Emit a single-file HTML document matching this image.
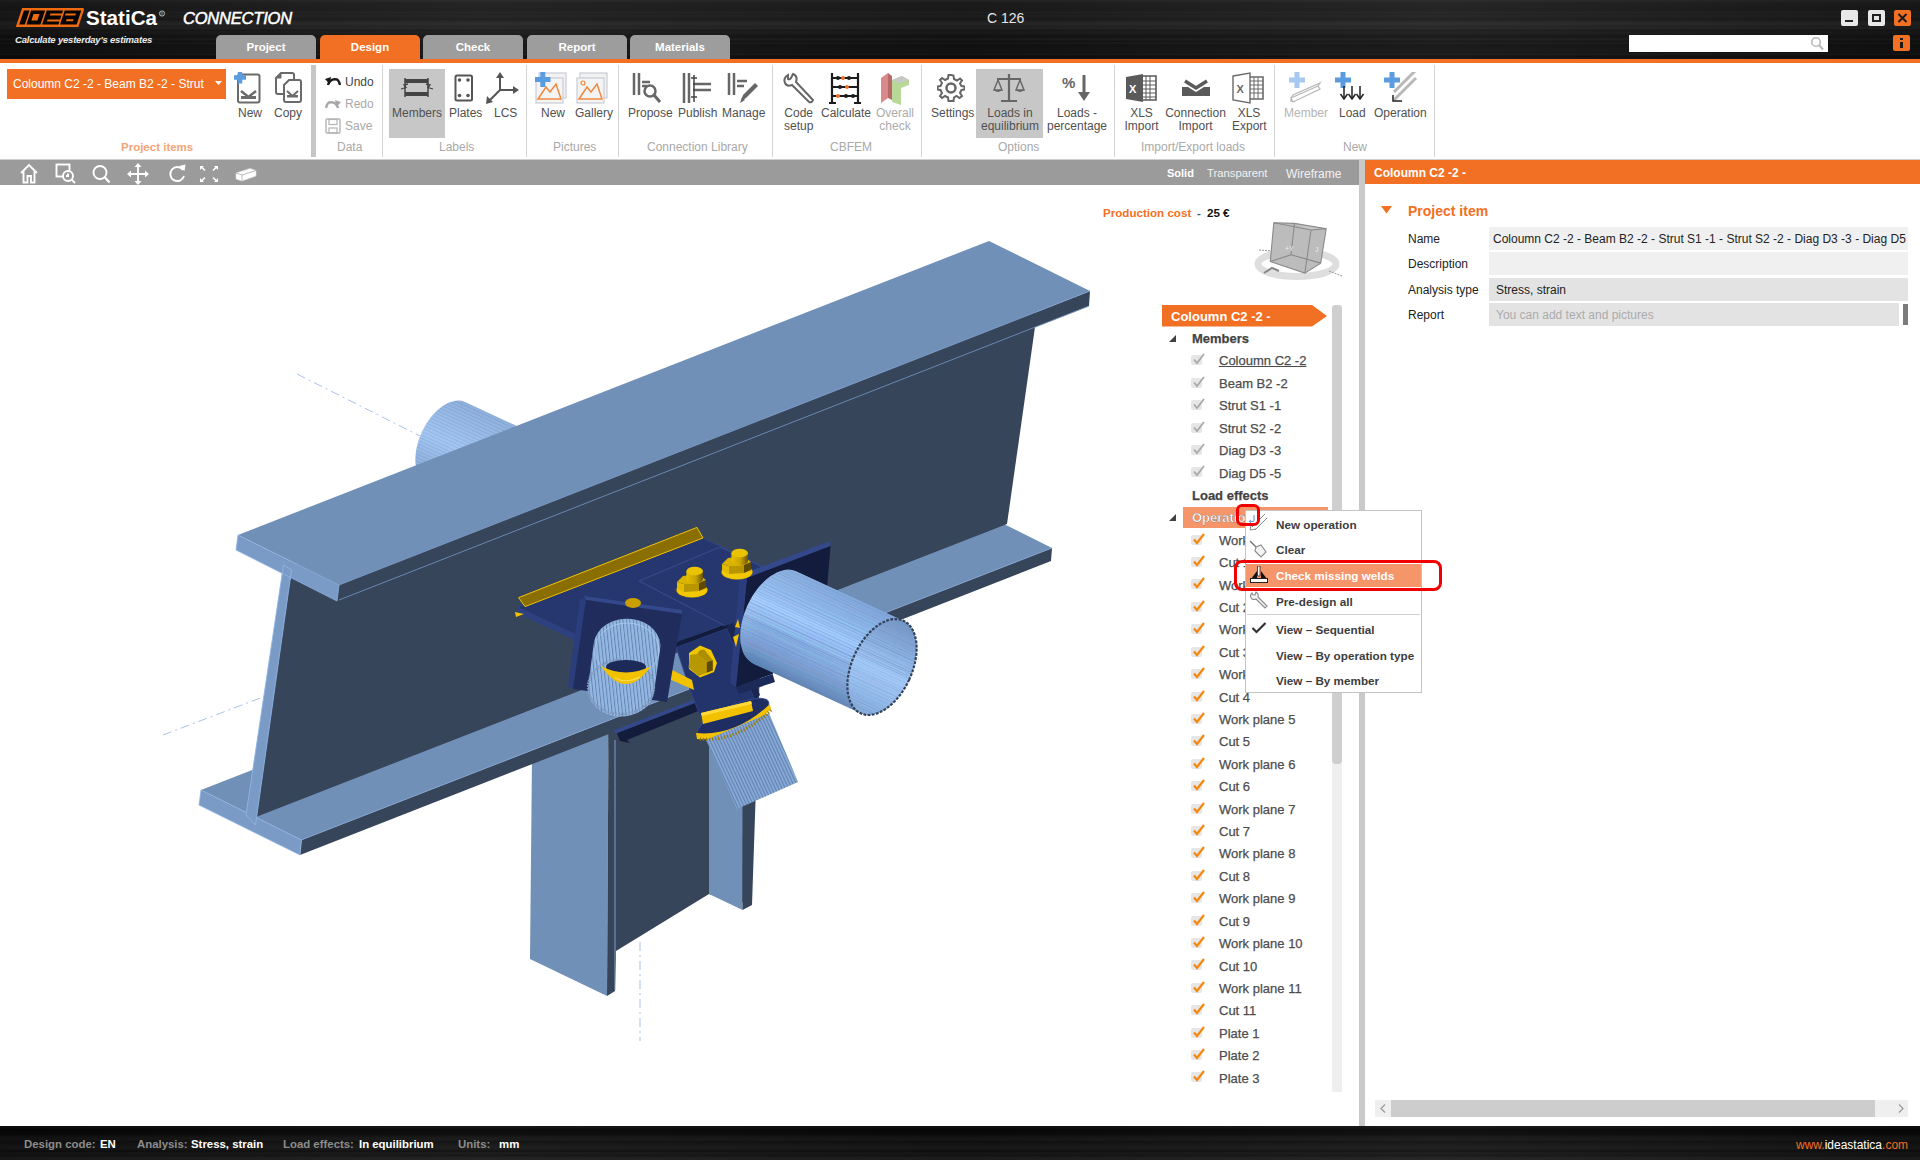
<!DOCTYPE html>
<html><head><meta charset="utf-8">
<style>
*{margin:0;padding:0;box-sizing:border-box}
html,body{width:1920px;height:1160px;overflow:hidden;background:#fff;font-family:"Liberation Sans",sans-serif}
.a{position:absolute}
.t{position:absolute;white-space:nowrap;line-height:1}
.brush{background:linear-gradient(90deg,rgba(0,0,0,.25),rgba(255,255,255,.02) 25%,rgba(0,0,0,.12) 50%,rgba(255,255,255,.03) 75%,rgba(0,0,0,.2))}
.brushT{background-image:linear-gradient(90deg,rgba(0,0,0,.25),rgba(255,255,255,.03) 25%,rgba(0,0,0,.1) 50%,rgba(255,255,255,.04) 75%,rgba(0,0,0,.2)),linear-gradient(180deg,rgb(36,36,36) 0.0px,rgb(37,37,37) 1.5px,rgb(30,30,30) 2.5px,rgb(29,29,29) 5.5px,rgb(27,27,27) 8.5px,rgb(30,30,30) 11.5px,rgb(34,34,34) 12.5px,rgb(29,29,29) 13.5px,rgb(32,32,32) 16.5px,rgb(25,25,25) 19.5px,rgb(34,34,34) 21.0px,rgb(40,40,40) 24.0px,rgb(31,31,31) 27.0px,rgb(39,39,39) 28.0px,rgb(30,30,30) 29.0px,rgb(24,24,24) 30.5px,rgb(28,28,28) 32.0px,rgb(23,23,23) 35.0px,rgb(18,18,18) 36.5px,rgb(28,28,28) 39.5px,rgb(16,16,16) 41.5px,rgb(25,25,25) 42.5px,rgb(17,17,17) 45.5px,rgb(20,20,20) 48.5px,rgb(20,20,20) 50.5px,rgb(17,17,17) 53.0px,rgb(25,25,25) 54.5px,rgb(10,10,10) 56.0px,rgb(18,18,18) 58.0px)}
.brushB{background-image:linear-gradient(90deg,rgba(0,0,0,.25),rgba(255,255,255,.02) 25%,rgba(0,0,0,.12) 50%,rgba(255,255,255,.03) 75%,rgba(0,0,0,.2)),linear-gradient(180deg,rgb(18,18,18) 0.0px,rgb(16,16,16) 2.0px,rgb(8,8,8) 3.0px,rgb(9,9,9) 5.5px,rgb(10,10,10) 7.5px,rgb(16,16,16) 10.0px,rgb(22,22,22) 11.0px,rgb(24,24,24) 14.0px,rgb(16,16,16) 16.0px,rgb(22,22,22) 18.0px,rgb(26,26,26) 21.0px,rgb(27,27,27) 22.0px,rgb(22,22,22) 24.0px,rgb(14,14,14) 25.0px,rgb(26,26,26) 27.0px,rgb(20,20,20) 29.5px,rgb(32,32,32) 32.0px)}
.tab{position:absolute;top:35px;height:24px;width:100px;border-radius:5px 5px 0 0;background:#9d9d9d;color:#fff;font-weight:bold;font-size:11.5px;text-align:center;line-height:24px}
.rl{position:absolute;font-size:12px;color:#505050;text-align:center;line-height:13px;white-space:nowrap}
.gl{position:absolute;top:141px;font-size:12px;color:#a9a9a9;white-space:nowrap;line-height:13px}
.sep{position:absolute;top:65px;width:1px;height:92px;background:#d4d4d4}
.tr{position:absolute;font-size:13px;color:#4d4d4d;white-space:nowrap;line-height:14px;-webkit-text-stroke:.25px #4d4d4d}
.cb{position:absolute;left:1191px;width:11px;height:10px;background:#e6e6e6;border-radius:2px}
.mi{position:absolute;left:1276px;font-size:11.7px;font-weight:bold;color:#3d3d3d;white-space:nowrap;line-height:13px}
</style></head>
<body>
<div class="a" style="left:0;top:0;width:1920px;height:1160px;overflow:hidden">

<!-- TITLE BAR -->
<div class="a brushT" style="left:0;top:0;width:1920px;height:59px"></div>
<div class="a" style="left:0;top:59px;width:1920px;height:4px;background:#f27024"></div>

<!-- logo -->
<svg class="a" style="left:0;top:0" width="180" height="34" viewBox="0 0 180 34">
 <g transform="translate(0,27) skewX(-18.43) translate(0,-27)">
  <path d="M15.8 8 H76.3 Q78.3 8 78.3 10 V27 H15.8 Z" fill="#f06a10"/>
  <g fill="#050505">
   <rect x="18.4" y="10.5" width="5.6" height="14"/>
   <path d="M25.6 10.5 H39.6 V24.5 H25.6 Z M29.2 14 V20.6 H35.2 V14 Z" fill-rule="evenodd"/>
   <path d="M41.2 10.5 H57.6 V13.6 H46 V15.6 H57.6 V19.4 H45 V21.4 H57.6 V24.5 H41.2 Z"/>
   <path d="M59.2 10.5 H75.8 V24.5 H59.2 Z M61.2 13.5 V15.5 H71.5 V13.5 Z M64 19.3 V21.3 H71 V19.3 Z" fill-rule="evenodd"/>
  </g>
 </g>
 <text x="86" y="25" font-family="Liberation Sans" font-weight="bold" font-size="20.5" fill="#fff" textLength="71" lengthAdjust="spacingAndGlyphs">StatiCa</text>
 <circle cx="162" cy="13.5" r="2.6" fill="none" stroke="#c8c8c8" stroke-width=".9"/>
 <text x="160.6" y="15" font-family="Liberation Sans" font-size="3.6" fill="#c8c8c8">R</text>
</svg>
<div class="t" style="left:183px;top:9.5px;font-size:16.5px;font-style:italic;color:#fff;letter-spacing:-.2px;-webkit-text-stroke:.5px #fff">CONNECTION</div>
<div class="t" style="left:15px;top:35px;font-size:9.5px;font-style:italic;font-weight:bold;color:#ececec;letter-spacing:-.2px">Calculate yesterday's estimates</div>
<div class="t" style="left:987px;top:11px;font-size:14px;color:#e6e6e6">C 126</div>

<!-- window buttons -->
<div class="a" style="left:1841px;top:10px;width:17px;height:16px;background:#e8e8e8;border-radius:2px"></div>
<div class="a" style="left:1845px;top:20px;width:8px;height:2px;background:#222"></div>
<div class="a" style="left:1868px;top:10px;width:17px;height:16px;background:#e8e8e8;border-radius:2px"></div>
<div class="a" style="left:1872px;top:14px;width:9px;height:8px;border:2px solid #222"></div>
<div class="a" style="left:1894px;top:10px;width:17px;height:16px;background:#f27024;border-radius:2px"></div>
<svg class="a" style="left:1894px;top:10px" width="17" height="16"><path d="M4.5 4 L12.5 12 M12.5 4 L4.5 12" stroke="#1a1a1a" stroke-width="2"/></svg>
<div class="a" style="left:1893px;top:35px;width:17px;height:16px;background:#f27024;border-radius:2px"></div>
<div class="a" style="left:1900px;top:38px;width:3px;height:2px;background:#1a1a1a"></div>
<div class="a" style="left:1900px;top:42px;width:3px;height:6px;background:#1a1a1a"></div>
<div class="a" style="left:1629px;top:35px;width:199px;height:17px;background:#fff"></div>
<svg class="a" style="left:1808px;top:35px" width="18" height="17"><circle cx="8" cy="7" r="4.3" fill="none" stroke="#b8b8b8" stroke-width="1.6"/><path d="M11 10 L15 14.5" stroke="#b8b8b8" stroke-width="2"/></svg>

<!-- tabs -->
<div class="tab" style="left:216px">Project</div>
<div class="tab" style="left:320px;background:#f27024">Design</div>
<div class="tab" style="left:423px">Check</div>
<div class="tab" style="left:527px">Report</div>
<div class="tab" style="left:630px">Materials</div>

<!-- RIBBON -->
<div class="a" style="left:0;top:159px;width:1920px;height:1px;background:#d0d0d0"></div>
<div class="a" style="left:7px;top:69px;width:219px;height:30px;background:#f27024"></div>
<div class="t" style="left:13px;top:78px;width:194px;overflow:hidden;font-size:12px;color:#fff;line-height:13px">Coloumn C2 -2 - Beam B2 -2 - Strut S1 -1</div>
<svg class="a" style="left:215px;top:81px" width="8" height="5"><path d="M0 0 H7 L3.5 4 Z" fill="#fff"/></svg>
<!-- New -->
<svg class="a" style="left:233px;top:72px" width="32" height="32" viewBox="0 0 32 32">
 <rect x="5" y="2.5" width="21.5" height="28" rx="2" fill="#fff" stroke="#6a6a6a" stroke-width="2"/>
 <path d="M8 19 L15.5 25 L23 19" fill="none" stroke="#6a6a6a" stroke-width="2.5"/>
 <rect x="8" y="24" width="15" height="3" fill="#6a6a6a"/>
 <path d="M1 5.5 H13 M7 0 V11.5" stroke="#5b9be0" stroke-width="4.5"/>
</svg>
<div class="rl" style="left:238px;top:107px">New</div>
<!-- Copy -->
<svg class="a" style="left:273px;top:72px" width="32" height="32" viewBox="0 0 32 32">
 <path d="M3 6 L8 1 H19 Q21 1 21 3 V20 Q21 22 19 22 H5 Q3 22 3 20 Z" fill="#fff" stroke="#6a6a6a" stroke-width="2"/>
 <path d="M3 6 H8 V1" fill="#6a6a6a" stroke="#6a6a6a" stroke-width="1"/>
 <path d="M11 13 L16 8 H26 Q28 8 28 10 V28 Q28 30 26 30 H13 Q11 30 11 28 Z" fill="#fff" stroke="#6a6a6a" stroke-width="2"/>
 <path d="M14 19 L19.5 24 L25 19" fill="none" stroke="#6a6a6a" stroke-width="2"/>
 <rect x="14" y="23" width="11" height="2.5" fill="#6a6a6a"/>
</svg>
<div class="rl" style="left:274px;top:107px">Copy</div>
<div class="t" style="left:121px;top:141px;font-size:11.5px;font-weight:bold;color:#f5a477;line-height:13px">Project items</div>
<div class="a" style="left:311px;top:65px;width:5px;height:92px;background:#c6c6c6"></div>

<!-- Data -->
<svg class="a" style="left:325px;top:76px" width="16" height="11"><path d="M3 9 Q5 2 12 3.5 Q14 4.5 15 9" fill="none" stroke="#1a1a1a" stroke-width="2.4"/><path d="M0 3 L6 1 L4.5 8 Z" fill="#1a1a1a"/></svg>
<div class="t" style="left:345px;top:76px;font-size:12px;color:#444">Undo</div>
<svg class="a" style="left:325px;top:99px" width="16" height="11"><path d="M13 9 Q11 2 4 3.5 Q2 4.5 1 9" fill="none" stroke="#a8a8a8" stroke-width="2.4"/><path d="M16 3 L10 1 L11.5 8 Z" fill="#a8a8a8"/></svg>
<div class="t" style="left:345px;top:98px;font-size:12px;color:#a9a9a9">Redo</div>
<svg class="a" style="left:325px;top:118px" width="16" height="16"><rect x="1" y="1" width="14" height="14" rx="1" fill="none" stroke="#b4b4b4" stroke-width="1.4"/><rect x="4" y="1.5" width="8" height="5" fill="none" stroke="#b4b4b4" stroke-width="1.2"/><rect x="4" y="10" width="8" height="5" fill="none" stroke="#b4b4b4" stroke-width="1.2"/></svg>
<div class="t" style="left:345px;top:120px;font-size:12px;color:#a9a9a9">Save</div>
<div class="gl" style="left:337px">Data</div>
<div class="sep" style="left:382px"></div>

<!-- Labels -->
<div class="a" style="left:389px;top:69px;width:56px;height:69px;background:#c7c7c7"></div>
<svg class="a" style="left:400px;top:76px" width="34" height="24" viewBox="0 0 34 24">
 <rect x="5" y="3" width="23" height="4" fill="#444"/><rect x="5" y="16" width="23" height="4" fill="#444"/>
 <path d="M5 2 V21 M28 2 V21" stroke="#444" stroke-width="1.5"/>
 <path d="M1 13 L6 11.5 L4 9 L8 8 M33 13 L28 11.5 L30 9 L26 8" fill="none" stroke="#444" stroke-width="1.3"/>
</svg>
<div class="rl" style="left:392px;top:107px">Members</div>
<svg class="a" style="left:454px;top:74px" width="20" height="28"><rect x="1.5" y="1.5" width="16.5" height="25" rx="1.5" fill="none" stroke="#555" stroke-width="2"/><circle cx="5.5" cy="6" r="1.8" fill="#555"/><circle cx="14" cy="6" r="1.8" fill="#555"/><circle cx="5.5" cy="21.5" r="1.8" fill="#555"/><circle cx="14" cy="21.5" r="1.8" fill="#555"/></svg>
<div class="rl" style="left:449px;top:107px">Plates</div>
<svg class="a" style="left:485px;top:72px" width="35" height="33"><path d="M15 4 V18 L30 18 M15 18 L4 29" fill="none" stroke="#555" stroke-width="2"/><path d="M11 6 L15 0 L19 6 Z M28 14 L34 18 L28 22 Z M2 24 L1 32 L8 30 Z" fill="#555"/></svg>
<div class="rl" style="left:494px;top:107px">LCS</div>
<div class="gl" style="left:439px">Labels</div>
<div class="sep" style="left:526px"></div>

<!-- Pictures -->
<svg class="a" style="left:535px;top:72px" width="33" height="33">
 <rect x="4" y="1" width="27" height="25" fill="#f2f2f2" stroke="#c8ccd4" stroke-width="1.2"/>
 <rect x="1" y="6" width="27" height="25" fill="#f4f4f4" stroke="#c8ccd4" stroke-width="1.2"/>
 <path d="M3 27 L11 15 L15 20 L21 12 L26 27 Z" fill="none" stroke="#f0883e" stroke-width="1.5"/>
 <path d="M0 7.5 H15.5 M7.8 0 V15" stroke="#5b9be0" stroke-width="5"/>
</svg>
<div class="rl" style="left:541px;top:107px">New</div>
<svg class="a" style="left:576px;top:72px" width="33" height="33">
 <rect x="4" y="1" width="27" height="25" fill="#f2f2f2" stroke="#c8ccd4" stroke-width="1.2"/>
 <rect x="1" y="6" width="27" height="25" fill="#f4f4f4" stroke="#c8ccd4" stroke-width="1.2"/>
 <path d="M3 27 L11 15 L15 20 L21 12 L26 27 Z" fill="none" stroke="#f0883e" stroke-width="1.5"/>
 <circle cx="7" cy="11" r="2" fill="none" stroke="#f0883e" stroke-width="1.2"/>
</svg>
<div class="rl" style="left:575px;top:107px">Gallery</div>
<div class="gl" style="left:553px">Pictures</div>
<div class="sep" style="left:618px"></div>

<!-- Connection Library -->
<svg class="a" style="left:632px;top:72px" width="34" height="33"><path d="M2 1 V23 M7 1 V23 M10 10 H18 M10 14 H15" stroke="#666" stroke-width="2.5"/><circle cx="18" cy="19" r="5.5" fill="none" stroke="#666" stroke-width="2.5"/><path d="M22 23 L28 30" stroke="#666" stroke-width="3"/></svg>
<div class="rl" style="left:628px;top:107px">Propose</div>
<svg class="a" style="left:682px;top:72px" width="30" height="32"><path d="M2 1 V31 M7 1 V31 M11 12 H29 M11 18 H29" stroke="#666" stroke-width="2.5"/><path d="M12 3 V30 M9 6 H15 M9 25 H15" stroke="#444" stroke-width="1.5"/></svg>
<div class="rl" style="left:678px;top:107px">Publish</div>
<svg class="a" style="left:727px;top:72px" width="33" height="32"><path d="M2 1 V23 M7 1 V23 M10 9 H20 M10 14 H17" stroke="#666" stroke-width="2.5"/><path d="M14 29 L16 23 L28 11 L31 14 L19 26 Z" fill="#666"/><path d="M13 31 L15 25 L18 28 Z" fill="#666"/></svg>
<div class="rl" style="left:722px;top:107px">Manage</div>
<div class="gl" style="left:647px">Connection Library</div>
<div class="sep" style="left:772px"></div>

<!-- CBFEM -->
<svg class="a" style="left:782px;top:72px" width="33" height="33"><path d="M6 3 Q1 6 3 11 Q5 15 10 13 L27 30 Q30 31 31 28 L14 10 Q16 4 11 2 L9 6 Q8 8 6 7 Z" fill="none" stroke="#666" stroke-width="2"/></svg>
<div class="rl" style="left:784px;top:107px">Code<br>setup</div>
<svg class="a" style="left:829px;top:72px" width="32" height="32"><path d="M3 1 V31 M29 1 V31 M3 6 H29 M3 15 H29 M3 24 H29 M0 31 H7 M25 31 H32" stroke="#1c1c1c" stroke-width="2.2"/><g fill="#1c1c1c"><circle cx="9" cy="6" r="2"/><circle cx="20" cy="6" r="2"/><circle cx="11" cy="15" r="2"/><circle cx="24" cy="24" r="2"/><circle cx="17" cy="24" r="2"/></g><g fill="#f27024"><circle cx="14" cy="6" r="2"/><circle cx="18" cy="15" r="2"/><circle cx="9" cy="24" r="2"/></g></svg>
<div class="rl" style="left:821px;top:107px">Calculate</div>
<svg class="a" style="left:880px;top:72px" width="30" height="33"><path d="M1 6 L8 1 V26 L1 31 Z" fill="#d88a8a"/><path d="M8 1 L12 4 V28 L8 26 Z" fill="#b86a6a"/><path d="M12 8 L22 4 L29 8 V13 L21 16 V33 L12 30 Z" fill="#b8d898"/><path d="M12 8 L22 4 L29 8 L19 11 Z" fill="#c8c8c8"/></svg>
<div class="rl" style="left:876px;top:107px;color:#ababab">Overall<br>check</div>
<div class="gl" style="left:830px">CBFEM</div>
<div class="sep" style="left:921px"></div>

<!-- Options -->
<svg class="a" style="left:937px;top:74px" width="28" height="28" viewBox="0 0 28 28"><path d="M14 1 L16.5 1.5 L17 5 L20 6.5 L23 4.5 L25 6.5 L23 9.5 L24.5 12 L27.5 12.5 V15.5 L24.5 16 L23 19 L25 22 L22.5 24 L19.5 22 L17 23.5 L16.5 27 H11.5 L11 23.5 L8 22 L5 24 L3 22 L5 19 L3.5 16 L0.5 15.5 V12.5 L3.5 12 L5 9 L3 6 L5 4 L8 6 L11 4.5 L11.5 1 Z" fill="none" stroke="#666" stroke-width="2"/><circle cx="14" cy="14" r="4.5" fill="none" stroke="#666" stroke-width="2.5"/></svg>
<div class="rl" style="left:931px;top:107px">Settings</div>
<div class="a" style="left:976px;top:69px;width:67px;height:69px;background:#c7c7c7"></div>
<svg class="a" style="left:993px;top:73px" width="32" height="30"><path d="M16 1 V27 M8 28 H24 M4 6 H28" stroke="#666" stroke-width="2.2"/><path d="M5 7 L1 17 H9 Z M27 7 L23 17 H31 Z" fill="none" stroke="#666" stroke-width="1.4"/><path d="M1 17 Q5 21 9 17 M23 17 Q27 21 31 17" fill="#666"/></svg>
<div class="rl" style="left:980px;top:107px;width:60px">Loads in<br>equilibrium</div>
<svg class="a" style="left:1062px;top:74px" width="30" height="28"><text x="0" y="14" font-family="Liberation Sans" font-weight="bold" font-size="15" fill="#666">%</text><path d="M22 1 V20" stroke="#666" stroke-width="3"/><path d="M16 18 L22 27 L28 18 Z" fill="#666"/></svg>
<div class="rl" style="left:1047px;top:107px;width:60px">Loads -<br>percentage</div>
<div class="gl" style="left:998px">Options</div>
<div class="sep" style="left:1114px"></div>

<!-- Import/Export -->
<svg class="a" style="left:1125px;top:73px" width="32" height="30"><path d="M1 4 L18 1 V29 L1 26 Z" fill="#5a5a5a"/><path d="M18 3 H31 V27 H18" fill="none" stroke="#5a5a5a" stroke-width="1.6"/><path d="M21 3 V27 M25 3 V27 M18 8 H31 M18 12 H31 M18 16 H31 M18 20 H31 M18 24 H31" stroke="#5a5a5a" stroke-width="1"/><text x="4" y="20" font-family="Liberation Sans" font-weight="bold" font-size="11" fill="#fff">X</text></svg>
<div class="rl" style="left:1123px;top:107px;width:37px">XLS<br>Import</div>
<svg class="a" style="left:1181px;top:79px" width="30" height="18"><path d="M1 8 H7 L15 13 L23 8 H29 V17 H1 Z" fill="#5a5a5a"/><path d="M4 2 L15 9 L26 2" fill="none" stroke="#5a5a5a" stroke-width="3.5"/></svg>
<div class="rl" style="left:1165px;top:107px;width:61px">Connection<br>Import</div>
<svg class="a" style="left:1232px;top:72px" width="33" height="32"><path d="M1 4 L18 1 V31 L1 28 Z" fill="#fff" stroke="#6a6a6a" stroke-width="1.4"/><path d="M18 5 H31 V27 H18" fill="none" stroke="#6a6a6a" stroke-width="1.6"/><path d="M22 5 V27 M26 5 V27 M18 9 H31 M18 13 H31 M18 17 H31 M18 21 H31" stroke="#6a6a6a" stroke-width="1"/><text x="4.5" y="21" font-family="Liberation Sans" font-weight="bold" font-size="11" fill="#6a6a6a">X</text></svg>
<div class="rl" style="left:1232px;top:107px;width:34px">XLS<br>Export</div>
<div class="gl" style="left:1141px">Import/Export loads</div>
<div class="sep" style="left:1274px"></div>

<!-- New -->
<svg class="a" style="left:1289px;top:72px" width="33" height="32"><path d="M0 8 H16 M8 0 V16" stroke="#a8c8f0" stroke-width="5"/><path d="M2 26 L29 14 L31 17 L4 30 Z M2 26 V30" fill="#fff" stroke="#b8b8b8" stroke-width="1.3"/><path d="M2 26 L4 23 L31 11 L29 14" fill="none" stroke="#b8b8b8" stroke-width="1.3"/></svg>
<div class="rl" style="left:1284px;top:107px;color:#b4b4b4">Member</div>
<svg class="a" style="left:1335px;top:72px" width="31" height="28"><path d="M0 8 H16 M8 0 V16" stroke="#5b9be0" stroke-width="5"/><path d="M9 14 V26 M17 14 V26 M25 14 V26" stroke="#222" stroke-width="1.5"/><path d="M5.5 22 L9 27 L12.5 22 M13.5 22 L17 27 L20.5 22 M21.5 22 L25 27 L28.5 22" fill="none" stroke="#222" stroke-width="1.5"/></svg>
<div class="rl" style="left:1339px;top:107px">Load</div>
<svg class="a" style="left:1384px;top:72px" width="34" height="32"><path d="M10 28 L32 6 M10 20 L32 -2" stroke="#b8b8b8" stroke-width="3"/><path d="M9 23 V29 H18" fill="none" stroke="#222" stroke-width="1.5"/><path d="M0 8 H16 M8 0 V16" stroke="#5b9be0" stroke-width="5"/></svg>
<div class="rl" style="left:1374px;top:107px">Operation</div>
<div class="gl" style="left:1343px">New</div>
<div class="sep" style="left:1434px"></div>


<!-- VIEW TOOLBAR -->
<div class="a" style="left:0;top:160px;width:1359px;height:25px;background:#9b9b9b"></div>
<div class="a" style="left:1359px;top:160px;width:6px;height:967px;background:#c9c9c9"></div>
<svg class="a" style="left:18px;top:163px" width="240" height="22" viewBox="0 0 240 22">
 <g fill="none" stroke="#fff" stroke-width="1.9">
  <path d="M3 10 L11 2 L19 10 M5.5 8 V19.5 H9.5 V13 H13 V19.5 H16.5 V8"/>
  <rect x="38.5" y="1.5" width="13" height="12"/>
  <circle cx="50" cy="13" r="5" fill="#9b9b9b"/>
  <path d="M50 10.5 V13 H48 M53.5 16.5 L57 20"/>
  <circle cx="82" cy="9.5" r="6.5"/><path d="M86.5 14 L91.5 19.5" stroke-width="2.3"/>
  <path d="M120 2 V20 M111 11 H129"/>
  <path d="M165 7 A7 7 0 1 0 166 13"/>
  <path d="M183 3.5 L187 7.5 M199 3.5 L195 7.5 M183 18.5 L187 14.5 M199 18.5 L195 14.5" stroke-width="1.6"/>
 </g>
 <g fill="#fff">
  <path d="M116.5 4 L120 0 L123.5 4 Z M116.5 18 L120 22 L123.5 18 Z M113 7.5 L109 11 L113 14.5 Z M127 7.5 L131 11 L127 14.5 Z"/>
  <path d="M161 3 L167.5 1.5 L166.5 8 Z"/>
  <path d="M182 3 H186 L182 7 Z M200 3 H196 L200 7 Z M182 19 H186 L182 15 Z M200 19 H196 L200 15 Z"/>
  <path d="M218 10 L232 5.5 L238 7.5 V13 L224 18 L218 16 Z" fill="#fff" stroke="#ddd" stroke-width=".6"/>
 </g>
 <path d="M218 10 L224 12 L238 7.5 M224 12 V18" fill="none" stroke="#aaa" stroke-width=".8"/>
</svg>
<div class="t" style="left:1167px;top:168px;font-size:11px;font-weight:bold;color:#fff">Solid</div>
<div class="t" style="left:1207px;top:168px;font-size:11.3px;color:#f2f2f2">Transparent</div>
<div class="t" style="left:1286px;top:168px;font-size:12px;color:#f2f2f2">Wireframe</div>


<!-- VIEWPORT -->
<svg class="a" style="left:0;top:185px" width="1359" height="941" viewBox="0 185 1359 941">
<defs>
<linearGradient id="tg" gradientUnits="userSpaceOnUse" x1="797" y1="572" x2="755" y2="664">
 <stop offset="0" stop-color="#8cb0de"/><stop offset=".25" stop-color="#9cc0ee"/><stop offset=".42" stop-color="#aed2ff"/><stop offset=".6" stop-color="#9abeec"/><stop offset=".85" stop-color="#82a6d4"/><stop offset="1" stop-color="#6a8cba"/></linearGradient>
<linearGradient id="tge" gradientUnits="userSpaceOnUse" x1="903" y1="621" x2="861" y2="713">
 <stop offset="0" stop-color="#7898c6"/><stop offset=".55" stop-color="#a8ccf8"/><stop offset="1" stop-color="#8cb0de"/></linearGradient>
<linearGradient id="tb" gradientUnits="userSpaceOnUse" x1="465" y1="402" x2="427" y2="484">
 <stop offset="0" stop-color="#8fb0dc"/><stop offset=".5" stop-color="#a4c6f2"/><stop offset="1" stop-color="#84a6d2"/></linearGradient>
<pattern id="st" width="4" height="3.2" patternUnits="userSpaceOnUse" patternTransform="rotate(24.8)"><rect width="4" height=".6" fill="#3d5a86" opacity=".22"/></pattern>
<pattern id="stv" width="3.4" height="4" patternUnits="userSpaceOnUse" patternTransform="rotate(-6)"><rect width="1" height="4" fill="#3f5a85" opacity=".55"/></pattern>
<pattern id="sts" width="3" height="3" patternUnits="userSpaceOnUse" patternTransform="rotate(-25)"><rect width="1" height="3" fill="#3f5a85" opacity=".5"/></pattern>
<linearGradient id="bcyl" x1="0" y1="0" x2="1" y2="0"><stop offset="0" stop-color="#e6bf00"/><stop offset=".55" stop-color="#c9a400"/><stop offset="1" stop-color="#6a5400"/></linearGradient>
</defs>
<g stroke="#a9c3ea" stroke-width="1" fill="none" stroke-dasharray="9 4 2 4">
<path d="M297 374 L430 441"/><path d="M163 735 L263 697"/><path d="M640 942 V1041"/></g>
<path d="M464.9 402.1 L664.6 494.3 A26.5 45.0 24.8 0 1 626.9 576.0 L427.1 483.9 A26.5 45.0 24.8 0 1 464.9 402.1 Z" fill="url(#tb)"/>
<path d="M464.9 402.1 L664.6 494.3 A26.5 45.0 24.8 0 1 626.9 576.0 L427.1 483.9 A26.5 45.0 24.8 0 1 464.9 402.1 Z" fill="url(#st)"/>
<polygon points="608.0,728.0 760.0,668.0 752.0,905.0 709.0,894.0 616.0,951.0 616.0,990.0" fill="#364559"/>
<polygon points="532.0,758.0 608.5,728.0 607.0,996.0 530.0,959.0" fill="#7190b8"/>
<polygon points="608.5,728.0 615.0,725.0 615.0,991.0 607.0,996.0" fill="#364559"/>
<path d="M615 740 V990" stroke="#8fb2e0" stroke-width=".8"/>
<polygon points="709.0,688.0 743.0,675.0 742.5,910.0 709.0,894.0" fill="#7190b8"/>
<polygon points="743.0,675.0 752.0,671.0 752.0,905.0 742.5,910.0" fill="#364559"/>
<polygon points="201.0,790.0 301.5,840.0 1052.0,548.0 951.5,498.0" fill="#7190b8"/>
<polygon points="301.5,840.0 1052.0,548.0 1051.0,561.0 300.0,855.0" fill="#364559"/>
<polygon points="201.0,790.0 301.5,840.0 300.0,855.0 199.0,805.0" fill="#7a9bc6" stroke="#8fb2e0" stroke-width=".8"/>
<polygon points="288.0,568.0 1035.0,290.0 1035.0,327.0 1007.0,524.0 256.0,817.0" fill="#364559"/>
<polygon points="283.5,565.0 291.5,570.0 255.5,825.0 246.0,815.0" fill="#7a9bc6" stroke="#8fb4e4" stroke-width=".9"/>
<polygon points="238.0,535.0 989.0,241.0 1090.0,291.0 339.0,585.0" fill="#7190b8"/>
<polygon points="339.0,585.0 1090.0,291.0 1089.0,306.0 337.0,601.0" fill="#364559"/>
<polygon points="238.0,535.0 339.0,585.0 337.0,601.0 236.0,550.0" fill="#7a9bc6" stroke="#8fb2e0" stroke-width=".8"/>
<path d="M282 576 L283.5 565 L291.5 570 L290 580" fill="none" stroke="#8fb4e4" stroke-width=".9"/>
<path d="M339 600 L1089 306" stroke="#6f90bb" stroke-width=".9"/>
<path d="M339 585 L1090 291" stroke="#86a8d6" stroke-width=".8"/>
<path d="M301 840 L1052 548" stroke="#86a8d6" stroke-width=".8"/>
<polygon points="617.0,733.0 705.0,699.0 708.0,707.0 627.0,740.0 630.0,743.0 620.0,741.0" fill="#131c3c"/>
<polygon points="612.0,731.0 703.0,696.0 705.0,699.0 617.0,733.0" fill="#34498c"/>
<polygon points="517.0,607.0 703.0,538.0 815.0,591.0 629.0,660.0" fill="#26366e" stroke="#34498c" stroke-width=".8"/>
<polygon points="517.0,607.0 629.0,660.0 629.0,666.0 517.0,613.0" fill="#2d4080"/>
<polygon points="629.0,660.0 815.0,591.0 815.0,597.0 629.0,666.0" fill="#131c3c"/>
<polygon points="639.0,581.0 720.0,547.0 780.0,575.0 737.0,632.0" fill="#26376f" stroke="#3a4f94" stroke-width=".9"/>
<polygon points="518.6,597.6 697.0,527.4 703.0,538.0 525.0,606.6" fill="#8a6e00" stroke="#f2c200" stroke-width="1"/>
<polygon points="515.0,612.0 524.0,614.0 516.0,617.0" fill="#f2c200"/>
<polygon points="676.0,647.0 727.0,628.0 755.0,700.0 748.0,712.0 703.0,723.0 690.0,690.0" fill="#23336c" stroke="#34498c" stroke-width=".8"/>
<polygon points="676.0,647.0 727.0,628.0 730.0,624.0 679.0,641.0" fill="#131c3c"/>
<polygon points="727.0,628.0 733.0,622.0 760.0,695.0 755.0,700.0" fill="#1a2650"/>
<polygon points="668.0,668.0 692.0,680.0 694.0,690.0 667.0,678.0" fill="#f2c200"/>
<ellipse cx="733" cy="718" rx="39" ry="12" transform="rotate(-24.7 733 718)" fill="#1f2e62" stroke="#34498c" stroke-width="1"/>
<path d="M696 733 Q735 737 770 704 L771 709 Q738 742 697 739 Z" fill="#f2c200"/>
<polygon points="701.0,713.0 751.0,701.0 753.0,711.0 703.0,724.0" fill="#f2c200"/>
<polygon points="701.0,713.0 751.0,701.0 752.0,704.0 702.0,716.0" fill="#ffd83a"/>
<polygon points="706.0,740.0 769.0,713.0 798.0,782.0 737.0,809.0" fill="#86a8d6"/>
<polygon points="706.0,740.0 769.0,713.0 798.0,782.0 737.0,809.0" fill="url(#sts)"/>
<path d="M700 739 Q738 742 771 710" fill="none" stroke="#9a7a00" stroke-width="3" stroke-dasharray="1.2 1.8"/>
<polygon points="745.0,573.0 830.0,541.0 830.5,546.0 747.0,578.0" fill="#34498c"/>
<polygon points="747.0,578.0 830.5,546.0 826.0,600.0 772.6,674.0 736.0,687.0" fill="#131c3c"/>
<polygon points="740.0,574.0 747.0,578.0 736.0,687.0 730.0,683.0" fill="#2b3d7d"/>
<polygon points="736.0,687.0 772.6,674.0 775.0,682.0 739.0,694.0" fill="#1c2a5a"/>
<clipPath id="tubeclip"><path d="M796.2 571.2 L903.4 620.7 A30.0 51.0 24.8 0 1 860.6 713.3 L753.5 663.9 A30.0 51.0 24.8 0 1 796.2 571.2 Z"/></clipPath>
<clipPath id="endclip"><path d="M909.2 679.6 L907.3 683.6 L905.1 687.4 L902.8 691.1 L900.3 694.7 L897.6 698.0 L894.9 701.0 L892.0 703.9 L889.1 706.4 L886.1 708.6 L883.1 710.6 L880.1 712.1 L877.1 713.4 L874.1 714.3 L871.2 714.8 L868.4 715.0 L865.7 714.8 L863.1 714.2 L860.6 713.3 L858.3 712.0 L856.2 710.4 L854.3 708.5 L852.6 706.2 L851.1 703.6 L849.9 700.8 L848.9 697.7 L848.1 694.4 L847.6 690.8 L847.4 687.1 L847.4 683.2 L847.7 679.3 L848.3 675.2 L849.1 671.0 L850.2 666.8 L851.5 662.6 L853.0 658.5 L854.8 654.4 L856.7 650.4 L858.9 646.6 L861.2 642.9 L863.7 639.3 L866.4 636.0 L869.1 633.0 L872.0 630.1 L874.9 627.6 L877.9 625.4 L880.9 623.4 L883.9 621.9 L886.9 620.6 L889.9 619.7 L892.8 619.2 L895.6 619.0 L898.3 619.2 L900.9 619.8 L903.4 620.7 L905.7 622.0 L907.8 623.6 L909.7 625.5 L911.4 627.8 L912.9 630.4 L914.1 633.2 L915.1 636.3 L915.9 639.6 L916.4 643.2 L916.6 646.9 L916.6 650.8 L916.3 654.7 L915.7 658.8 L914.9 663.0 L913.8 667.2 L912.5 671.4 L911.0 675.5 L909.2 679.6Z"/></clipPath>
<path d="M796.2 571.2 L903.4 620.7 A30.0 51.0 24.8 0 1 860.6 713.3 L753.5 663.9 A30.0 51.0 24.8 0 1 796.2 571.2 Z" fill="url(#tg)"/>
<g clip-path="url(#tubeclip)"><path d="M759.9 554.5 L939.7 637.5" stroke="#6a8cbc" stroke-width="0.83" opacity="0.23"/><path d="M758.9 556.7 L938.7 639.7" stroke="#6a8cbc" stroke-width="0.88" opacity="0.36"/><path d="M758.1 558.5 L937.9 641.4" stroke="#6a8cbc" stroke-width="1.00" opacity="0.15"/><path d="M757.1 560.5 L936.9 643.5" stroke="#6a8cbc" stroke-width="1.10" opacity="0.23"/><path d="M756.0 562.9 L935.8 645.9" stroke="#6a8cbc" stroke-width="0.79" opacity="0.44"/><path d="M754.8 565.6 L934.6 648.6" stroke="#6a8cbc" stroke-width="0.88" opacity="0.20"/><path d="M753.4 568.7 L933.1 651.6" stroke="#6a8cbc" stroke-width="0.94" opacity="0.33"/><path d="M752.1 571.4 L931.9 654.4" stroke="#6a8cbc" stroke-width="0.95" opacity="0.17"/><path d="M750.9 574.0 L930.7 657.0" stroke="#6a8cbc" stroke-width="0.52" opacity="0.26"/><path d="M749.5 577.0 L929.3 660.0" stroke="#6a8cbc" stroke-width="0.93" opacity="0.32"/><path d="M748.1 580.1 L927.9 663.1" stroke="#6a8cbc" stroke-width="1.05" opacity="0.40"/><path d="M747.0 582.4 L926.8 665.4" stroke="#6a8cbc" stroke-width="0.77" opacity="0.43"/><path d="M745.6 585.6 L925.4 668.5" stroke="#6a8cbc" stroke-width="0.56" opacity="0.46"/><path d="M744.7 587.4 L924.5 670.4" stroke="#6a8cbc" stroke-width="1.08" opacity="0.23"/><path d="M743.6 589.8 L923.4 672.7" stroke="#6a8cbc" stroke-width="0.68" opacity="0.37"/><path d="M742.5 592.2 L922.3 675.2" stroke="#6a8cbc" stroke-width="0.71" opacity="0.29"/><path d="M741.3 594.8 L921.1 677.8" stroke="#6a8cbc" stroke-width="1.04" opacity="0.35"/><path d="M740.0 597.6 L919.8 680.5" stroke="#6a8cbc" stroke-width="1.01" opacity="0.48"/><path d="M738.5 600.8 L918.3 683.8" stroke="#6a8cbc" stroke-width="0.60" opacity="0.38"/><path d="M737.1 603.9 L916.9 686.8" stroke="#6a8cbc" stroke-width="1.04" opacity="0.49"/><path d="M735.9 606.4 L915.7 689.4" stroke="#6a8cbc" stroke-width="0.63" opacity="0.40"/><path d="M734.6 609.4 L914.3 692.4" stroke="#6a8cbc" stroke-width="0.67" opacity="0.35"/><path d="M733.8 611.2 L913.5 694.1" stroke="#6a8cbc" stroke-width="1.09" opacity="0.45"/><path d="M732.9 612.9 L912.7 695.9" stroke="#6a8cbc" stroke-width="0.75" opacity="0.43"/><path d="M732.1 614.8 L911.9 697.8" stroke="#6a8cbc" stroke-width="0.96" opacity="0.25"/><path d="M730.7 617.9 L910.4 700.8" stroke="#6a8cbc" stroke-width="0.87" opacity="0.17"/><path d="M729.9 619.6 L909.7 702.5" stroke="#6a8cbc" stroke-width="0.70" opacity="0.40"/><path d="M728.4 622.7 L908.2 705.6" stroke="#6a8cbc" stroke-width="0.80" opacity="0.49"/><path d="M726.9 625.9 L906.7 708.9" stroke="#6a8cbc" stroke-width="0.55" opacity="0.26"/><path d="M725.7 628.5 L905.5 711.5" stroke="#6a8cbc" stroke-width="0.62" opacity="0.16"/><path d="M724.7 630.8 L904.5 713.8" stroke="#6a8cbc" stroke-width="0.59" opacity="0.36"/><path d="M723.9 632.5 L903.7 715.5" stroke="#6a8cbc" stroke-width="0.69" opacity="0.45"/><path d="M722.4 635.7 L902.2 718.7" stroke="#6a8cbc" stroke-width="0.73" opacity="0.46"/><path d="M721.3 638.1 L901.1 721.1" stroke="#6a8cbc" stroke-width="0.89" opacity="0.33"/><path d="M720.1 640.7 L899.9 723.7" stroke="#6a8cbc" stroke-width="0.87" opacity="0.35"/><path d="M718.6 643.9 L898.4 726.9" stroke="#6a8cbc" stroke-width="0.76" opacity="0.33"/><path d="M717.3 646.7 L897.1 729.7" stroke="#6a8cbc" stroke-width="0.68" opacity="0.23"/></g>
<path d="M909.2 679.6 L907.3 683.6 L905.1 687.4 L902.8 691.1 L900.3 694.7 L897.6 698.0 L894.9 701.0 L892.0 703.9 L889.1 706.4 L886.1 708.6 L883.1 710.6 L880.1 712.1 L877.1 713.4 L874.1 714.3 L871.2 714.8 L868.4 715.0 L865.7 714.8 L863.1 714.2 L860.6 713.3 L858.3 712.0 L856.2 710.4 L854.3 708.5 L852.6 706.2 L851.1 703.6 L849.9 700.8 L848.9 697.7 L848.1 694.4 L847.6 690.8 L847.4 687.1 L847.4 683.2 L847.7 679.3 L848.3 675.2 L849.1 671.0 L850.2 666.8 L851.5 662.6 L853.0 658.5 L854.8 654.4 L856.7 650.4 L858.9 646.6 L861.2 642.9 L863.7 639.3 L866.4 636.0 L869.1 633.0 L872.0 630.1 L874.9 627.6 L877.9 625.4 L880.9 623.4 L883.9 621.9 L886.9 620.6 L889.9 619.7 L892.8 619.2 L895.6 619.0 L898.3 619.2 L900.9 619.8 L903.4 620.7 L905.7 622.0 L907.8 623.6 L909.7 625.5 L911.4 627.8 L912.9 630.4 L914.1 633.2 L915.1 636.3 L915.9 639.6 L916.4 643.2 L916.6 646.9 L916.6 650.8 L916.3 654.7 L915.7 658.8 L914.9 663.0 L913.8 667.2 L912.5 671.4 L911.0 675.5 L909.2 679.6Z" fill="url(#tge)"/>
<g clip-path="url(#endclip)"><path d="M867.0 603.9 L939.7 637.5" stroke="#6a8cbc" stroke-width="0.84" opacity="0.31"/><path d="M865.6 607.1 L938.2 640.6" stroke="#6a8cbc" stroke-width="0.80" opacity="0.31"/><path d="M864.4 609.7 L937.0 643.2" stroke="#6a8cbc" stroke-width="0.81" opacity="0.21"/><path d="M863.2 612.3 L935.8 645.9" stroke="#6a8cbc" stroke-width="0.56" opacity="0.43"/><path d="M862.2 614.5 L934.8 648.0" stroke="#6a8cbc" stroke-width="0.99" opacity="0.18"/><path d="M860.9 617.2 L933.6 650.8" stroke="#6a8cbc" stroke-width="1.09" opacity="0.16"/><path d="M859.4 620.4 L932.1 654.0" stroke="#6a8cbc" stroke-width="0.87" opacity="0.38"/><path d="M858.6 622.3 L931.2 655.9" stroke="#6a8cbc" stroke-width="0.82" opacity="0.16"/><path d="M857.8 624.1 L930.4 657.6" stroke="#6a8cbc" stroke-width="0.65" opacity="0.22"/><path d="M857.0 625.8 L929.6 659.3" stroke="#6a8cbc" stroke-width="0.76" opacity="0.31"/><path d="M855.6 628.8 L928.2 662.3" stroke="#6a8cbc" stroke-width="0.88" opacity="0.33"/><path d="M854.5 631.2 L927.1 664.7" stroke="#6a8cbc" stroke-width="0.77" opacity="0.38"/><path d="M853.5 633.3 L926.1 666.8" stroke="#6a8cbc" stroke-width="1.10" opacity="0.50"/><path d="M852.1 636.3 L924.7 669.8" stroke="#6a8cbc" stroke-width="0.69" opacity="0.40"/><path d="M851.2 638.3 L923.8 671.8" stroke="#6a8cbc" stroke-width="0.54" opacity="0.25"/><path d="M849.8 641.2 L922.5 674.7" stroke="#6a8cbc" stroke-width="1.01" opacity="0.29"/><path d="M848.8 643.5 L921.4 677.0" stroke="#6a8cbc" stroke-width="1.01" opacity="0.49"/><path d="M848.0 645.1 L920.7 678.6" stroke="#6a8cbc" stroke-width="1.05" opacity="0.22"/><path d="M846.9 647.5 L919.6 681.0" stroke="#6a8cbc" stroke-width="0.74" opacity="0.49"/><path d="M846.1 649.3 L918.8 682.8" stroke="#6a8cbc" stroke-width="0.97" opacity="0.37"/><path d="M845.2 651.3 L917.8 684.9" stroke="#6a8cbc" stroke-width="0.70" opacity="0.18"/><path d="M843.7 654.6 L916.3 688.1" stroke="#6a8cbc" stroke-width="0.57" opacity="0.42"/><path d="M842.8 656.6 L915.4 690.1" stroke="#6a8cbc" stroke-width="0.54" opacity="0.19"/><path d="M841.4 659.5 L914.0 693.0" stroke="#6a8cbc" stroke-width="0.84" opacity="0.21"/><path d="M840.3 661.9 L912.9 695.4" stroke="#6a8cbc" stroke-width="0.94" opacity="0.22"/><path d="M839.5 663.7 L912.1 697.3" stroke="#6a8cbc" stroke-width="0.57" opacity="0.38"/><path d="M838.4 666.1 L911.0 699.6" stroke="#6a8cbc" stroke-width="0.66" opacity="0.22"/><path d="M836.9 669.3 L909.5 702.8" stroke="#6a8cbc" stroke-width="0.68" opacity="0.43"/><path d="M835.5 672.4 L908.1 705.9" stroke="#6a8cbc" stroke-width="0.74" opacity="0.22"/><path d="M834.1 675.4 L906.7 708.9" stroke="#6a8cbc" stroke-width="0.56" opacity="0.37"/><path d="M832.6 678.6 L905.2 712.2" stroke="#6a8cbc" stroke-width="0.65" opacity="0.22"/><path d="M831.2 681.5 L903.9 715.1" stroke="#6a8cbc" stroke-width="0.68" opacity="0.27"/><path d="M830.4 683.3 L903.1 716.8" stroke="#6a8cbc" stroke-width="0.85" opacity="0.18"/><path d="M829.5 685.3 L902.1 718.8" stroke="#6a8cbc" stroke-width="0.72" opacity="0.36"/><path d="M828.4 687.7 L901.0 721.2" stroke="#6a8cbc" stroke-width="0.79" opacity="0.49"/><path d="M827.2 690.3 L899.8 723.8" stroke="#6a8cbc" stroke-width="0.61" opacity="0.45"/><path d="M826.3 692.2 L899.0 725.7" stroke="#6a8cbc" stroke-width="0.99" opacity="0.47"/><path d="M825.4 694.2 L898.0 727.7" stroke="#6a8cbc" stroke-width="0.94" opacity="0.22"/></g>
<path d="M909.2 679.6 L907.3 683.6 L905.1 687.4 L902.8 691.1 L900.3 694.7 L897.6 698.0 L894.9 701.0 L892.0 703.9 L889.1 706.4 L886.1 708.6 L883.1 710.6 L880.1 712.1 L877.1 713.4 L874.1 714.3 L871.2 714.8 L868.4 715.0 L865.7 714.8 L863.1 714.2 L860.6 713.3 L858.3 712.0 L856.2 710.4 L854.3 708.5 L852.6 706.2 L851.1 703.6 L849.9 700.8 L848.9 697.7 L848.1 694.4 L847.6 690.8 L847.4 687.1 L847.4 683.2 L847.7 679.3 L848.3 675.2 L849.1 671.0 L850.2 666.8 L851.5 662.6 L853.0 658.5 L854.8 654.4 L856.7 650.4 L858.9 646.6 L861.2 642.9 L863.7 639.3 L866.4 636.0 L869.1 633.0 L872.0 630.1 L874.9 627.6 L877.9 625.4 L880.9 623.4 L883.9 621.9 L886.9 620.6 L889.9 619.7 L892.8 619.2 L895.6 619.0 L898.3 619.2 L900.9 619.8 L903.4 620.7 L905.7 622.0 L907.8 623.6 L909.7 625.5 L911.4 627.8 L912.9 630.4 L914.1 633.2 L915.1 636.3 L915.9 639.6 L916.4 643.2 L916.6 646.9 L916.6 650.8 L916.3 654.7 L915.7 658.8 L914.9 663.0 L913.8 667.2 L912.5 671.4 L911.0 675.5 L909.2 679.6Z" fill="none" stroke="#34425a" stroke-width="2.2" stroke-dasharray="2.8 1.4"/>
<polygon points="584.0,596.0 682.0,610.0 682.0,614.0 586.0,600.0" fill="#34498c"/>
<polygon points="580.0,598.0 586.0,600.0 573.0,689.0 568.0,686.0" fill="#2b3d7d"/>
<polygon points="586.0,600.0 682.0,614.0 667.0,702.0 573.0,689.0" fill="#1f2c5c"/>
<path d="M594 642 A33 27 0 0 1 660 650 L654 692 A33 27 0 0 1 588 687 Z" fill="#94b8e4"/>
<path d="M594 642 A33 27 0 0 1 660 650 L654 692 A33 27 0 0 1 588 687 Z" fill="url(#stv)"/>
<ellipse cx="627" cy="650" rx="32" ry="27" fill="none" stroke="#b4d0f4" stroke-width="1" opacity=".7"/>
<ellipse cx="621" cy="687" rx="33" ry="27" fill="none" stroke="#7f98bb" stroke-width="2.4" stroke-dasharray="1.6 1.1"/>
<ellipse cx="626" cy="667" rx="20" ry="7" fill="#1c2a5a"/>
<path d="M601 666 Q626 702 651 666 Q626 679 601 666 Z" fill="#f2c200"/>
<path d="M615 678 Q626 684 640 677" fill="none" stroke="#ffe680" stroke-width="1.2" opacity=".7"/>
<ellipse cx="633" cy="603" rx="8" ry="5" fill="#c9a000"/>
<ellipse cx="692.0" cy="590.0" rx="15.5" ry="7.5" fill="#f2c800"/>
<ellipse cx="692.0" cy="590.0" rx="15.5" ry="7.5" fill="none" stroke="#b08c00" stroke-width=".8" stroke-dasharray="1 1.5"/>
<polygon points="677.0,582.0 684.0,584.0 684.0,592.0 677.0,589.0" fill="#e2ba00"/>
<polygon points="684.0,584.0 699.0,583.0 699.0,591.0 684.0,592.0" fill="#b89600"/>
<polygon points="699.0,583.0 706.0,580.0 706.0,588.0 699.0,591.0" fill="#5e4a00"/>
<polygon points="677.0,582.0 683.0,576.0 698.0,574.0 706.0,580.0 699.0,583.0 684.0,584.0" fill="#d9b300"/>
<path d="M686.4 571.0 H703.0 V579.0 A8.3 4.3 0 0 1 686.4 579.0 Z" fill="url(#bcyl)"/>
<ellipse cx="694.7" cy="571.0" rx="8.3" ry="4.3" fill="#e9c300"/>
<ellipse cx="737.0" cy="572.0" rx="15.5" ry="7.5" fill="#f2c800"/>
<ellipse cx="737.0" cy="572.0" rx="15.5" ry="7.5" fill="none" stroke="#b08c00" stroke-width=".8" stroke-dasharray="1 1.5"/>
<polygon points="722.0,564.0 729.0,566.0 729.0,574.0 722.0,571.0" fill="#e2ba00"/>
<polygon points="729.0,566.0 744.0,565.0 744.0,573.0 729.0,574.0" fill="#b89600"/>
<polygon points="744.0,565.0 751.0,562.0 751.0,570.0 744.0,573.0" fill="#5e4a00"/>
<polygon points="722.0,564.0 728.0,558.0 743.0,556.0 751.0,562.0 744.0,565.0 729.0,566.0" fill="#d9b300"/>
<path d="M731.4 553.0 H748.0 V561.0 A8.3 4.3 0 0 1 731.4 561.0 Z" fill="url(#bcyl)"/>
<ellipse cx="739.7" cy="553.0" rx="8.3" ry="4.3" fill="#e9c300"/>
<path d="M689 653 L700 645.5 L711 650 L717 663 L714 672 L700 677.5 L689 669 Z" fill="#f0c600"/>
<polygon points="689.9,655.0 697.2,654.1 706.7,661.9 706.7,672.7 698.5,676.1 688.6,667.5" fill="#b89800"/>
<polygon points="697.2,654.1 699.8,650.3 704.1,649.4 712.8,660.2 706.7,661.9" fill="#ad8e00"/>
<polygon points="706.7,661.9 712.8,660.2 712.8,670.5 706.7,672.7" fill="#5e4a00"/>
<polygon points="735.0,627.0 738.0,619.0 740.0,628.0" fill="#f2c200"/>
<polygon points="733.0,637.0 739.0,634.0 736.0,647.0" fill="#f2c200"/>
</svg>
<!-- VIEWPORT-END -->
<!-- PRODUCTION COST + VIEW CUBE -->
<div class="t" style="left:1103px;top:207px;font-size:11.6px;font-weight:bold;color:#f27024">Production cost</div>
<div class="t" style="left:1197px;top:207px;font-size:11.6px;font-weight:bold;color:#555">-</div>
<div class="t" style="left:1207px;top:207px;font-size:11.6px;font-weight:bold;color:#111">25 €</div>
<svg class="a" style="left:1240px;top:210px" width="110" height="80" viewBox="1240 210 110 80">
 <ellipse cx="1297" cy="264" rx="39" ry="12.5" fill="none" stroke="#dedede" stroke-width="7"/>
 <path d="M1259 250 L1272 251 M1329 271 L1342 276" stroke="#999" stroke-width="1" stroke-dasharray="2 1"/>
 <path d="M1264 273 L1272 268 L1279 271" fill="none" stroke="#888" stroke-width="2"/>
 <polygon points="1273.8,222.8 1294.5,223.4 1326.2,228.6 1320.7,263.1 1304.8,273.1 1270.3,261.4" fill="#bcbcbc"/>
 <polygon points="1294.5,223.4 1326.2,228.6 1311,230" fill="#c8c8c8"/>
 <g fill="none" stroke="#8a8a8a" stroke-width="1.1">
  <path d="M1273.8 222.8 L1294.5 223.4 L1326.2 228.6 L1320.7 263.1 L1304.8 273.1 L1270.3 261.4 Z"/>
  <path d="M1273.8 222.8 L1311 230 L1326.2 228.6 M1311 230 L1304.8 273.1"/>
  <path d="M1294.5 223.4 L1291 254.8 L1270.3 261.4 M1291 254.8 L1320.7 263.1"/>
 </g>
 <text x="1285" y="251" font-family="Liberation Sans" font-size="7" fill="#eee">+Y</text>
 <text x="1315" y="252" font-family="Liberation Sans" font-size="7" fill="#eee">J</text>
</svg>
<!-- TREE -->
<svg class="a" style="left:1162px;top:305px" width="166" height="22"><path d="M0 0 H150 L165 11 L150 21.5 H0 Z" fill="#f27024"/></svg>
<div class="t" style="left:1171px;top:310px;font-size:13px;font-weight:bold;color:#fff;line-height:14px">Coloumn C2 -2 -</div>
<div class="a" style="left:1332px;top:764px;width:10px;height:328px;background:#efefef"></div>
<div class="a" style="left:1332px;top:305px;width:10px;height:459px;background:#cfcfcf;border-radius:3px"></div>

<svg class="a" style="left:1169px;top:335px" width="8" height="8"><path d="M7 0 V7 H0 Z" fill="#404040"/></svg>
<div class="tr" style="left:1192px;top:332.0px;font-weight:bold;color:#414141">Members</div>
<div class="cb" style="top:355.3px"></div>
<svg class="a" style="left:1192px;top:353.3px" width="14" height="12"><path d="M2 6.5 L5 10 L12 1" fill="none" stroke="#a9a9a9" stroke-width="1.8"/></svg>
<div class="tr" style="left:1219px;top:354.4px;text-decoration:underline">Coloumn C2 -2</div>
<div class="cb" style="top:377.7px"></div>
<svg class="a" style="left:1192px;top:375.7px" width="14" height="12"><path d="M2 6.5 L5 10 L12 1" fill="none" stroke="#a9a9a9" stroke-width="1.8"/></svg>
<div class="tr" style="left:1219px;top:376.8px">Beam B2 -2</div>
<div class="cb" style="top:400.1px"></div>
<svg class="a" style="left:1192px;top:398.1px" width="14" height="12"><path d="M2 6.5 L5 10 L12 1" fill="none" stroke="#a9a9a9" stroke-width="1.8"/></svg>
<div class="tr" style="left:1219px;top:399.2px">Strut S1 -1</div>
<div class="cb" style="top:422.6px"></div>
<svg class="a" style="left:1192px;top:420.6px" width="14" height="12"><path d="M2 6.5 L5 10 L12 1" fill="none" stroke="#a9a9a9" stroke-width="1.8"/></svg>
<div class="tr" style="left:1219px;top:421.7px">Strut S2 -2</div>
<div class="cb" style="top:445.0px"></div>
<svg class="a" style="left:1192px;top:443.0px" width="14" height="12"><path d="M2 6.5 L5 10 L12 1" fill="none" stroke="#a9a9a9" stroke-width="1.8"/></svg>
<div class="tr" style="left:1219px;top:444.1px">Diag D3 -3</div>
<div class="cb" style="top:467.4px"></div>
<svg class="a" style="left:1192px;top:465.4px" width="14" height="12"><path d="M2 6.5 L5 10 L12 1" fill="none" stroke="#a9a9a9" stroke-width="1.8"/></svg>
<div class="tr" style="left:1219px;top:466.5px">Diag D5 -5</div>
<div class="tr" style="left:1192px;top:488.9px;font-weight:bold;color:#414141">Load effects</div>
<div class="a" style="left:1183px;top:507px;width:145px;height:21px;background:#f5956a"></div>
<svg class="a" style="left:1169px;top:514px" width="8" height="8"><path d="M7 0 V7 H0 Z" fill="#404040"/></svg>
<div class="tr" style="left:1192px;top:511.3px;font-weight:bold;color:#fff">Operations</div>
<div class="cb" style="top:534.6px"></div>
<svg class="a" style="left:1192px;top:532.6px" width="14" height="12"><path d="M2 6.5 L5 10 L12 1" fill="none" stroke="#f7860d" stroke-width="2.2"/></svg>
<div class="tr" style="left:1219px;top:533.7px">Work plane 1</div>
<div class="cb" style="top:557.0px"></div>
<svg class="a" style="left:1192px;top:555.0px" width="14" height="12"><path d="M2 6.5 L5 10 L12 1" fill="none" stroke="#f7860d" stroke-width="2.2"/></svg>
<div class="tr" style="left:1219px;top:556.1px">Cut 1</div>
<div class="cb" style="top:579.4px"></div>
<svg class="a" style="left:1192px;top:577.4px" width="14" height="12"><path d="M2 6.5 L5 10 L12 1" fill="none" stroke="#f7860d" stroke-width="2.2"/></svg>
<div class="tr" style="left:1219px;top:578.5px">Work plane 2</div>
<div class="cb" style="top:601.8px"></div>
<svg class="a" style="left:1192px;top:599.8px" width="14" height="12"><path d="M2 6.5 L5 10 L12 1" fill="none" stroke="#f7860d" stroke-width="2.2"/></svg>
<div class="tr" style="left:1219px;top:600.9px">Cut 2</div>
<div class="cb" style="top:624.2px"></div>
<svg class="a" style="left:1192px;top:622.2px" width="14" height="12"><path d="M2 6.5 L5 10 L12 1" fill="none" stroke="#f7860d" stroke-width="2.2"/></svg>
<div class="tr" style="left:1219px;top:623.3px">Work plane 3</div>
<div class="cb" style="top:646.6px"></div>
<svg class="a" style="left:1192px;top:644.6px" width="14" height="12"><path d="M2 6.5 L5 10 L12 1" fill="none" stroke="#f7860d" stroke-width="2.2"/></svg>
<div class="tr" style="left:1219px;top:645.7px">Cut 3</div>
<div class="cb" style="top:669.1px"></div>
<svg class="a" style="left:1192px;top:667.1px" width="14" height="12"><path d="M2 6.5 L5 10 L12 1" fill="none" stroke="#f7860d" stroke-width="2.2"/></svg>
<div class="tr" style="left:1219px;top:668.2px">Work plane 4</div>
<div class="cb" style="top:691.5px"></div>
<svg class="a" style="left:1192px;top:689.5px" width="14" height="12"><path d="M2 6.5 L5 10 L12 1" fill="none" stroke="#f7860d" stroke-width="2.2"/></svg>
<div class="tr" style="left:1219px;top:690.6px">Cut 4</div>
<div class="cb" style="top:713.9px"></div>
<svg class="a" style="left:1192px;top:711.9px" width="14" height="12"><path d="M2 6.5 L5 10 L12 1" fill="none" stroke="#f7860d" stroke-width="2.2"/></svg>
<div class="tr" style="left:1219px;top:713.0px">Work plane 5</div>
<div class="cb" style="top:736.3px"></div>
<svg class="a" style="left:1192px;top:734.3px" width="14" height="12"><path d="M2 6.5 L5 10 L12 1" fill="none" stroke="#f7860d" stroke-width="2.2"/></svg>
<div class="tr" style="left:1219px;top:735.4px">Cut 5</div>
<div class="cb" style="top:758.7px"></div>
<svg class="a" style="left:1192px;top:756.7px" width="14" height="12"><path d="M2 6.5 L5 10 L12 1" fill="none" stroke="#f7860d" stroke-width="2.2"/></svg>
<div class="tr" style="left:1219px;top:757.8px">Work plane 6</div>
<div class="cb" style="top:781.1px"></div>
<svg class="a" style="left:1192px;top:779.1px" width="14" height="12"><path d="M2 6.5 L5 10 L12 1" fill="none" stroke="#f7860d" stroke-width="2.2"/></svg>
<div class="tr" style="left:1219px;top:780.2px">Cut 6</div>
<div class="cb" style="top:803.5px"></div>
<svg class="a" style="left:1192px;top:801.5px" width="14" height="12"><path d="M2 6.5 L5 10 L12 1" fill="none" stroke="#f7860d" stroke-width="2.2"/></svg>
<div class="tr" style="left:1219px;top:802.6px">Work plane 7</div>
<div class="cb" style="top:825.9px"></div>
<svg class="a" style="left:1192px;top:823.9px" width="14" height="12"><path d="M2 6.5 L5 10 L12 1" fill="none" stroke="#f7860d" stroke-width="2.2"/></svg>
<div class="tr" style="left:1219px;top:825.0px">Cut 7</div>
<div class="cb" style="top:848.3px"></div>
<svg class="a" style="left:1192px;top:846.3px" width="14" height="12"><path d="M2 6.5 L5 10 L12 1" fill="none" stroke="#f7860d" stroke-width="2.2"/></svg>
<div class="tr" style="left:1219px;top:847.4px">Work plane 8</div>
<div class="cb" style="top:870.8px"></div>
<svg class="a" style="left:1192px;top:868.8px" width="14" height="12"><path d="M2 6.5 L5 10 L12 1" fill="none" stroke="#f7860d" stroke-width="2.2"/></svg>
<div class="tr" style="left:1219px;top:869.9px">Cut 8</div>
<div class="cb" style="top:893.2px"></div>
<svg class="a" style="left:1192px;top:891.2px" width="14" height="12"><path d="M2 6.5 L5 10 L12 1" fill="none" stroke="#f7860d" stroke-width="2.2"/></svg>
<div class="tr" style="left:1219px;top:892.3px">Work plane 9</div>
<div class="cb" style="top:915.6px"></div>
<svg class="a" style="left:1192px;top:913.6px" width="14" height="12"><path d="M2 6.5 L5 10 L12 1" fill="none" stroke="#f7860d" stroke-width="2.2"/></svg>
<div class="tr" style="left:1219px;top:914.7px">Cut 9</div>
<div class="cb" style="top:938.0px"></div>
<svg class="a" style="left:1192px;top:936.0px" width="14" height="12"><path d="M2 6.5 L5 10 L12 1" fill="none" stroke="#f7860d" stroke-width="2.2"/></svg>
<div class="tr" style="left:1219px;top:937.1px">Work plane 10</div>
<div class="cb" style="top:960.4px"></div>
<svg class="a" style="left:1192px;top:958.4px" width="14" height="12"><path d="M2 6.5 L5 10 L12 1" fill="none" stroke="#f7860d" stroke-width="2.2"/></svg>
<div class="tr" style="left:1219px;top:959.5px">Cut 10</div>
<div class="cb" style="top:982.8px"></div>
<svg class="a" style="left:1192px;top:980.8px" width="14" height="12"><path d="M2 6.5 L5 10 L12 1" fill="none" stroke="#f7860d" stroke-width="2.2"/></svg>
<div class="tr" style="left:1219px;top:981.9px">Work plane 11</div>
<div class="cb" style="top:1005.2px"></div>
<svg class="a" style="left:1192px;top:1003.2px" width="14" height="12"><path d="M2 6.5 L5 10 L12 1" fill="none" stroke="#f7860d" stroke-width="2.2"/></svg>
<div class="tr" style="left:1219px;top:1004.3px">Cut 11</div>
<div class="cb" style="top:1027.6px"></div>
<svg class="a" style="left:1192px;top:1025.6px" width="14" height="12"><path d="M2 6.5 L5 10 L12 1" fill="none" stroke="#f7860d" stroke-width="2.2"/></svg>
<div class="tr" style="left:1219px;top:1026.7px">Plate 1</div>
<div class="cb" style="top:1050.0px"></div>
<svg class="a" style="left:1192px;top:1048.0px" width="14" height="12"><path d="M2 6.5 L5 10 L12 1" fill="none" stroke="#f7860d" stroke-width="2.2"/></svg>
<div class="tr" style="left:1219px;top:1049.1px">Plate 2</div>
<div class="cb" style="top:1072.4px"></div>
<svg class="a" style="left:1192px;top:1070.4px" width="14" height="12"><path d="M2 6.5 L5 10 L12 1" fill="none" stroke="#f7860d" stroke-width="2.2"/></svg>
<div class="tr" style="left:1219px;top:1071.5px">Plate 3</div><!-- CONTEXT MENU -->
<div class="a" style="left:1245px;top:510px;width:177px;height:183px;background:#fff;border:1px solid #c4c4c4"></div>
<div class="a" style="left:1246px;top:564px;width:175px;height:23px;background:#f5956a"></div>
<div class="a" style="left:1247px;top:614px;width:173px;height:1px;background:#cfcfcf"></div>
<svg class="a" style="left:1248px;top:513px" width="20" height="18"><path d="M4 14 L17 1 M7 17 L19 5" stroke="#8a8a8a" stroke-width="1"/><path d="M3 12 L2 17 L8 16" fill="none" stroke="#8a8a8a" stroke-width="1"/></svg>
<div class="mi" style="left:1276px;top:518px">New operation</div>
<svg class="a" style="left:1249px;top:540px" width="20" height="18"><path d="M1 1 L8 8" stroke="#777" stroke-width="1.4"/><path d="M7 7 L12 5 L17 12 L12 17 L6 11 Z" fill="#f4f4f4" stroke="#8a8a8a" stroke-width="1.1"/></svg>
<div class="mi" style="left:1276px;top:543px">Clear</div>
<svg class="a" style="left:1250px;top:566px" width="18" height="17"><path d="M7.5 0 H10 V10 H7.5 Z" fill="#fff" stroke="#222" stroke-width=".8"/><path d="M1 13 L7 5 V13 Z M17 13 L11 5 V13 Z" fill="#111"/><rect x="0.5" y="12.5" width="17" height="4" fill="#fff" stroke="#222" stroke-width="1"/></svg>
<div class="mi" style="left:1276px;top:569px;color:#fff">Check missing welds</div>
<svg class="a" style="left:1249px;top:591px" width="20" height="18"><path d="M3 2 Q0 5 3 8 Q5 9 7 8 L16 17 L18 15 L9 6 Q10 3 7 1 L6 4 L4 4 Z" fill="#f4f4f4" stroke="#8a8a8a" stroke-width="1.1"/></svg>
<div class="mi" style="left:1276px;top:595px">Pre-design all</div>
<svg class="a" style="left:1251px;top:622px" width="16" height="12"><path d="M1.5 6 L5.5 10 L14.5 1" fill="none" stroke="#333" stroke-width="2.2"/></svg>
<div class="mi" style="left:1276px;top:623px">View – Sequential</div>
<div class="mi" style="left:1276px;top:649px">View – By operation type</div>
<div class="mi" style="left:1276px;top:674px">View – By member</div>
<div class="a" style="left:1234px;top:560px;width:208px;height:31px;border:3.5px solid #f00000;border-radius:8px"></div>
<svg class="a" style="left:1247px;top:514px" width="10" height="10"><path d="M7 1 V6 Q7 7.5 5.5 7.5 H3.5" fill="none" stroke="#6aa2e8" stroke-width="1.2"/><path d="M4 5.5 L1.5 7.5 L4 9.5 Z" fill="#6aa2e8"/></svg>
<div class="a" style="left:1236px;top:504px;width:24px;height:22px;border:3.5px solid #f00000;border-radius:6px"></div>


<!-- RIGHT PANEL -->
<div class="a" style="left:1365px;top:160px;width:555px;height:24px;background:#f27024"></div>
<div class="t" style="left:1374px;top:167px;font-size:12px;font-weight:bold;color:#fff">Coloumn C2 -2 -</div>
<svg class="a" style="left:1381px;top:206px" width="11" height="8"><path d="M0 0 H11 L5.5 7.5 Z" fill="#f27024"/></svg>
<div class="t" style="left:1408px;top:204px;font-size:14px;font-weight:bold;color:#f27024">Project item</div>
<div class="t" style="left:1408px;top:233px;font-size:12px;color:#222">Name</div>
<div class="t" style="left:1408px;top:258px;font-size:12px;color:#222">Description</div>
<div class="t" style="left:1408px;top:284px;font-size:12px;color:#222">Analysis type</div>
<div class="t" style="left:1408px;top:309px;font-size:12px;color:#222">Report</div>
<div class="a" style="left:1489px;top:227px;width:419px;height:23px;background:#f0f0f0"></div>
<div class="a" style="left:1489px;top:252px;width:419px;height:23px;background:#f0f0f0"></div>
<div class="a" style="left:1489px;top:278px;width:419px;height:23px;background:#e3e3e3"></div>
<div class="a" style="left:1489px;top:303px;width:410px;height:23px;background:#e3e3e3"></div>
<div class="a" style="left:1903px;top:304px;width:5px;height:21px;background:#7c7c7c"></div>
<div class="t" style="left:1493px;top:233px;font-size:12px;color:#222">Coloumn C2 -2 - Beam B2 -2 - Strut S1 -1 - Strut S2 -2 - Diag D3 -3 - Diag D5</div>
<div class="t" style="left:1496px;top:284px;font-size:12px;color:#222">Stress, strain</div>
<div class="t" style="left:1496px;top:309px;font-size:12px;color:#ababab">You can add text and pictures</div>
<div class="a" style="left:1375px;top:1100px;width:533px;height:17px;background:#efefef"></div>
<div class="a" style="left:1391px;top:1100px;width:484px;height:17px;background:#cdcdcd"></div>
<svg class="a" style="left:1380px;top:1104px" width="6" height="9"><path d="M5 0.5 L1 4.5 L5 8.5" fill="none" stroke="#999" stroke-width="1.2"/></svg>
<svg class="a" style="left:1898px;top:1104px" width="6" height="9"><path d="M1 0.5 L5 4.5 L1 8.5" fill="none" stroke="#999" stroke-width="1.2"/></svg>


<!-- STATUS BAR -->
<div class="a brushB" style="left:0;top:1126px;width:1920px;height:34px"></div>
<div class="t" style="left:24px;top:1139px;font-size:11.4px;font-weight:bold;color:#8c8c8c">Design code:</div>
<div class="t" style="left:100px;top:1139px;font-size:11.4px;font-weight:bold;color:#fff">EN</div>
<div class="t" style="left:137px;top:1139px;font-size:11.4px;font-weight:bold;color:#8c8c8c">Analysis:</div>
<div class="t" style="left:191px;top:1139px;font-size:11.4px;font-weight:bold;color:#fff">Stress, strain</div>
<div class="t" style="left:283px;top:1139px;font-size:11.4px;font-weight:bold;color:#8c8c8c">Load effects:</div>
<div class="t" style="left:359px;top:1139px;font-size:11.4px;font-weight:bold;color:#fff">In equilibrium</div>
<div class="t" style="left:458px;top:1139px;font-size:11.4px;font-weight:bold;color:#8c8c8c">Units:</div>
<div class="t" style="left:499px;top:1139px;font-size:11.4px;font-weight:bold;color:#fff">mm</div>
<div class="t" style="left:1796px;top:1139px;font-size:12px;color:#fff"><span style="color:#f27024">www.</span>ideastatica<span style="color:#f27024">.com</span></div>

</div>
</body></html>
